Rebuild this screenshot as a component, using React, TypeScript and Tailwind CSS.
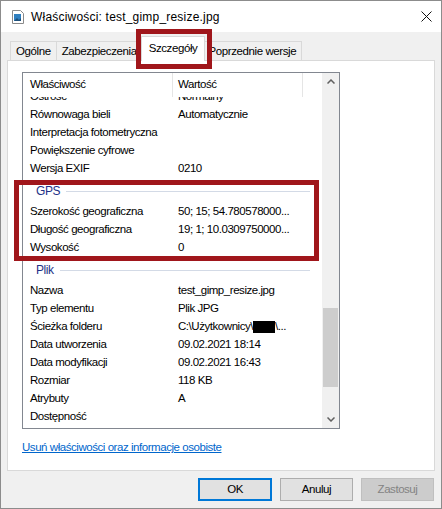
import React from 'react'

type Row = { name: string, value?: React.ReactNode }

const exifRows: Row[] = [
    { name: 'Ostrość', value: 'Normalny' },
    { name: 'Równowaga bieli', value: 'Automatycznie' },
    { name: 'Interpretacja fotometryczna' },
    { name: 'Powiększenie cyfrowe' },
    { name: 'Wersja EXIF', value: '0210' },
]

const gpsRows: Row[] = [
    { name: 'Szerokość geograficzna', value: '50; 15; 54.780578000...' },
    { name: 'Długość geograficzna', value: '19; 1; 10.0309750000...' },
    { name: 'Wysokość', value: '0' },
]

const fileRows: Row[] = [
    { name: 'Nazwa', value: 'test_gimp_resize.jpg' },
    { name: 'Typ elementu', value: 'Plik JPG' },
    {
        name: 'Ścieżka folderu',
        value: (
            <span className="flex items-center">
                C:\Użytkownicy\<span className="inline-block w-[22px] h-[12px] bg-black" />\...
            </span>
        ),
    },
    { name: 'Data utworzenia', value: '09.02.2021 18:14' },
    { name: 'Data modyfikacji', value: '09.02.2021 16:43' },
    { name: 'Rozmiar', value: '118 KB' },
    { name: 'Atrybuty', value: 'A' },
    { name: 'Dostępność' },
]

function PropRow({ row }: { row: Row }) {
    return (
        <div className="flex h-[18px] items-center">
            <div className="w-[150px] pl-[7px] shrink-0 whitespace-nowrap">{row.name}</div>
            <div className="pl-[5px] whitespace-nowrap">{row.value}</div>
        </div>
    )
}

function GroupHeader({ title }: { title: string }) {
    return (
        <div className="flex h-[25px] items-center pl-[13px] pr-[12px] pt-[1px]">
            <span className="text-[#1e3287] text-[12px]">{title}</span>
            <div className="flex-1 ml-[6px] h-px bg-[#d3dae6]" />
        </div>
    )
}

function Tab({ label, active }: { label: string, active?: boolean }) {
    if (active) {
        return (
            <div className="relative -mx-[2px] z-10 h-[25px] px-[7px] pt-[3px] bg-white border border-b-0 border-[#d9d9d9] flex items-start">
                {label}
            </div>
        )
    }
    return (
        <div className="h-[20px] px-[5px] pt-px bg-[#f0f0f0] border border-b-0 border-[#d9d9d9] -ml-px first:ml-0 flex items-center">
            {label}
        </div>
    )
}

export default function App() {
    return (
        <div
            className="w-[442px] h-[509px] bg-[#f0f0f0] border border-[#8c8c8c] flex flex-col text-[11.5px] tracking-[-0.45px] text-black relative"
            style={{ fontFamily: '"Liberation Sans", Arial, sans-serif' }}
        >
            {/* title bar */}
            <div className="h-[31px] bg-white flex items-center shrink-0">
                <svg width="12" height="14" viewBox="0 0 12 14" className="ml-[11px] mr-[7px]">
                    <path d="M0.5 0.5h8l3 3v10h-11z" fill="#fff" stroke="#8a8a8a" />
                    <rect x="2" y="4" width="7" height="7" fill="#2f7fbf" />
                    <path d="M2 11l3-3 2 2 2-2v3z" fill="#1d4f7a" />
                </svg>
                <span className="text-[12px] tracking-[0.2px]">Właściwości: test_gimp_resize.jpg</span>
                <svg width="11" height="11" viewBox="0 0 11 11" className="ml-auto mr-[9px]">
                    <path d="M0.5 0.5l10 10M10.5 0.5l-10 10" stroke="#111" strokeWidth="1" />
                </svg>
            </div>

            {/* tabs */}
            <div className="flex items-end h-[29px] pl-[9px] shrink-0 text-[11.5px] tracking-[-0.4px]">
                <Tab label="Ogólne" />
                <Tab label="Zabezpieczenia" />
                <Tab label="Szczegóły" active />
                <Tab label="Poprzednie wersje" />
            </div>

            {/* tab page */}
            <div className="mx-[6px] -mt-px h-[411px] bg-white border border-[#d9d9d9] flex flex-col pl-[14px] pt-[11px]">
                <div className="w-[318px] h-[357px] border border-[#828790] flex overflow-hidden">
                    <div className="flex-1 flex flex-col overflow-hidden">
                        <div className="bg-white h-[24px] flex items-center shrink-0">
                            <div className="w-[150px] pl-[7px] h-full flex items-center border-r border-[#e5e5e5]">Właściwość</div>
                            <div className="w-[130px] pl-[5px] h-full flex items-center border-r border-[#e5e5e5]">Wartość</div>
                        </div>
                        <div className="flex-1 overflow-hidden">
                            <div className="-mt-[9px]">
                                {exifRows.map((r) => <PropRow key={r.name} row={r} />)}
                                <GroupHeader title="GPS" />
                                {gpsRows.map((r) => <PropRow key={r.name} row={r} />)}
                                <GroupHeader title="Plik" />
                                {fileRows.map((r) => <PropRow key={r.name} row={r} />)}
                            </div>
                        </div>
                    </div>
                    {/* scrollbar */}
                    <div className="w-[17px] bg-[#f0f0f0] flex flex-col items-center shrink-0">
                        <div className="h-[17px] flex items-center justify-center">
                            <svg width="8" height="5" viewBox="0 0 8 5"><path d="M0.5 4.5L4 1l3.5 3.5" fill="none" stroke="#606060" strokeWidth="1.5" /></svg>
                        </div>
                        <div className="h-[218px]" />
                        <div className="w-[15px] h-[79px] bg-[#cdcdcd]" />
                        <div className="flex-1" />
                        <div className="h-[17px] flex items-center justify-center">
                            <svg width="8" height="5" viewBox="0 0 8 5"><path d="M0.5 0.5L4 4l3.5-3.5" fill="none" stroke="#606060" strokeWidth="1.5" /></svg>
                        </div>
                    </div>
                </div>
                <div className="mt-[10px] h-[18px] flex items-center">
                    <span className="text-[#0066cc] underline">Usuń właściwości oraz informacje osobiste</span>
                </div>
            </div>

            {/* buttons */}
            <div className="flex justify-end gap-[8px] pr-[7px] mt-[7px]">
                <div className="w-[74px] h-[23px] bg-[#e1e1e1] border-2 border-[#0078d7] flex items-center justify-center">OK</div>
                <div className="w-[73px] h-[23px] bg-[#e1e1e1] border border-[#adadad] flex items-center justify-center">Anuluj</div>
                <div className="w-[73px] h-[23px] bg-[#cccccc] border border-[#bfbfbf] text-[#838383] flex items-center justify-center">Zastosuj</div>
            </div>

            {/* annotation boxes */}
            <div className="absolute left-[135px] top-[28px] w-[76px] h-[40px] border-[5px] border-[#a0161b] z-20" />
            <div className="absolute left-[13px] top-[179px] w-[305px] h-[81px] border-[5px] border-[#a0161b] z-20" />
        </div>
    )
}
